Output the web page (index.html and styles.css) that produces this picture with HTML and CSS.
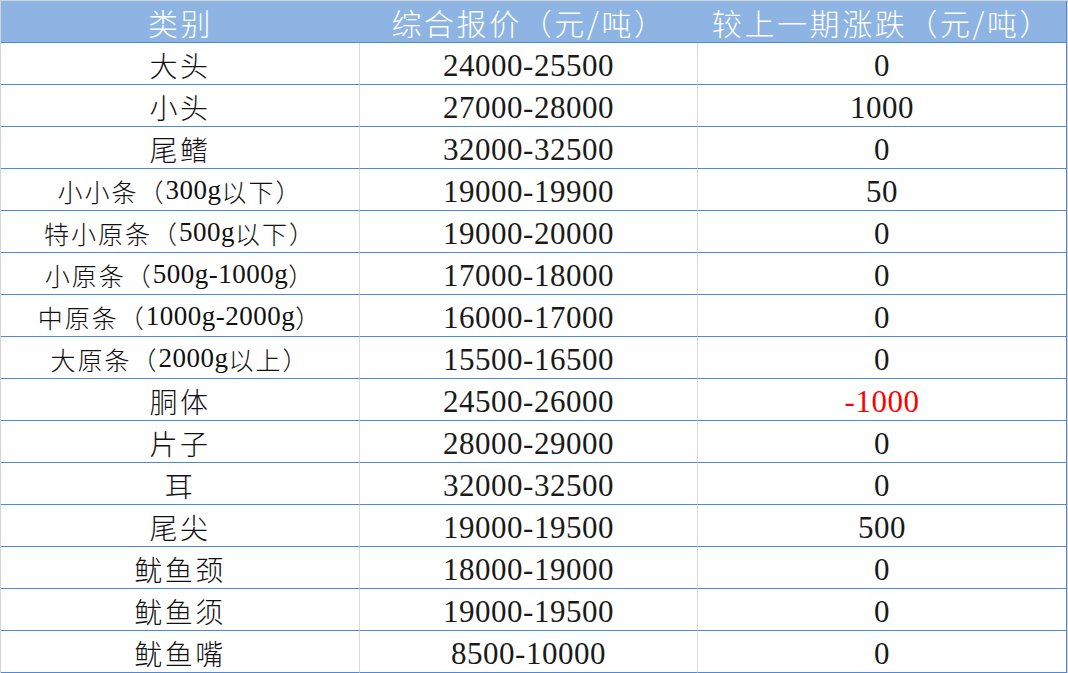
FILE: index.html
```html
<!DOCTYPE html>
<html lang="zh-CN">
<head>
<meta charset="utf-8">
<title>价格表</title>
<link rel="stylesheet" href="styles.css">
</head>
<body>
<div class="sheet">
  <div class="grid">
    <div class="cell head">类别</div>
    <div class="cell head">综合报价（元/吨）</div>
    <div class="cell head">较上一期涨跌（元/吨）</div>

    <div class="cell name">大头</div><div class="cell num">24000-25500</div><div class="cell num">0</div>
    <div class="cell name">小头</div><div class="cell num">27000-28000</div><div class="cell num">1000</div>
    <div class="cell name">尾鳍</div><div class="cell num">32000-32500</div><div class="cell num">0</div>
    <div class="cell name small">小小条（<span class="d">300g</span>以下）</div><div class="cell num">19000-19900</div><div class="cell num">50</div>
    <div class="cell name small">特小原条（<span class="d">500g</span>以下）</div><div class="cell num">19000-20000</div><div class="cell num">0</div>
    <div class="cell name small">小原条（<span class="d">500g-1000g</span>）</div><div class="cell num">17000-18000</div><div class="cell num">0</div>
    <div class="cell name small">中原条（<span class="d">1000g-2000g</span>）</div><div class="cell num">16000-17000</div><div class="cell num">0</div>
    <div class="cell name small">大原条（<span class="d">2000g</span>以上）</div><div class="cell num">15500-16500</div><div class="cell num">0</div>
    <div class="cell name">胴体</div><div class="cell num">24500-26000</div><div class="cell num neg">-1000</div>
    <div class="cell name">片子</div><div class="cell num">28000-29000</div><div class="cell num">0</div>
    <div class="cell name">耳</div><div class="cell num">32000-32500</div><div class="cell num">0</div>
    <div class="cell name">尾尖</div><div class="cell num">19000-19500</div><div class="cell num">500</div>
    <div class="cell name">鱿鱼颈</div><div class="cell num">18000-19000</div><div class="cell num">0</div>
    <div class="cell name">鱿鱼须</div><div class="cell num">19000-19500</div><div class="cell num">0</div>
    <div class="cell name">鱿鱼嘴</div><div class="cell num">8500-10000</div><div class="cell num">0</div>
  </div>
</div>
</body>
</html>
```

FILE: styles.css
```css
html, body {
  margin: 0;
  padding: 0;
  background: #ffffff;
}

.sheet {
  width: 1068px;
  height: 673px;
  box-sizing: border-box;
  border-top: 1px solid #d4d4d4;
  border-left: 1px solid #d4d4d4;
  border-right: 1px solid #d4d4d4;
  overflow: hidden;
}

.grid {
  display: grid;
  grid-template-columns: 359px 338px 368px;
  grid-auto-rows: 42px;
  border-right: 1px solid #4f89d4;
}

.cell {
  box-sizing: border-box;
  display: flex;
  align-items: center;
  justify-content: center;
  border-bottom: 1px solid #4f89d4;
  white-space: nowrap;
  color: #111;
}

.head {
  background: #8db4e2;
  color: #ffffff;
  font-family: "Noto Sans CJK SC", sans-serif;
  font-weight: 300;
  font-size: 30px;
  letter-spacing: 2.6px;
  padding-top: 1px;
}

.name, .num {
  border-right: 1px solid #d9d9d9;
}

.grid > .cell:nth-child(3n) {
  border-right: none;
}

.name {
  font-family: "Noto Sans CJK SC", sans-serif;
  font-weight: 300;
  font-size: 28px;
  letter-spacing: 2.5px;
  padding-top: 2px;
}

.name.small {
  font-size: 25px;
  letter-spacing: 2px;
}

.d {
  font-family: "Liberation Serif", serif;
  font-size: 27px;
  letter-spacing: 0.5px;
}

.num {
  font-family: "Liberation Serif", "Noto Sans CJK SC", serif;
  font-size: 31px;
  letter-spacing: 0.5px;
  padding-top: 4px;
  color: #1a1a1a;
}

.neg {
  color: #ff0000;
}
```
